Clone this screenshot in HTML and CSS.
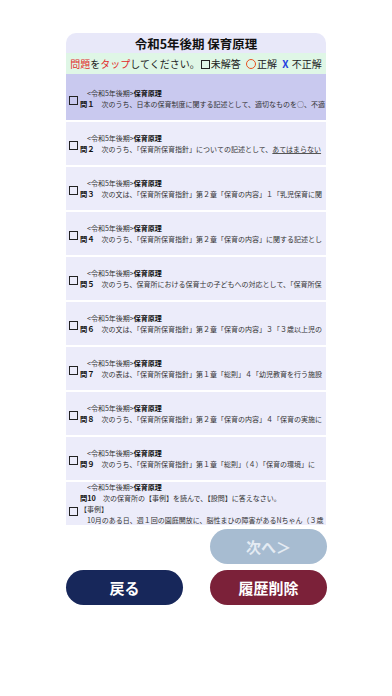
FILE: index.html
```html
<!DOCTYPE html>
<html lang="ja">
<head>
<meta charset="utf-8">
<title>令和5年後期 保育原理</title>
<link rel="stylesheet" href="styles.css">
</head>
<body>
<div class="page">
  <div class="panel">
    <div class="title">令和5年後期 保育原理</div>
    <div class="legend"><span class="red">問題</span>を<span class="red">タップ</span>してください。<span class="box"></span>未解答 <span class="circle"></span>正解 <span class="x">X</span> 不正解</div>
    <div class="list">
      <div class="row active">
        <span class="check"></span>
        <div class="body">
          <div class="meta">&lt;令和5年後期&gt;<b>保育原理</b></div>
          <div class="q"><b>問１</b>　次のうち、日本の保育制度に関する記述として、適切なものを○、不適</div>
        </div>
      </div>
      <div class="row">
        <span class="check"></span>
        <div class="body">
          <div class="meta">&lt;令和5年後期&gt;<b>保育原理</b></div>
          <div class="q"><b>問２</b>　次のうち、「保育所保育指針」についての記述として、<u>あてはまらない</u></div>
        </div>
      </div>
      <div class="row">
        <span class="check"></span>
        <div class="body">
          <div class="meta">&lt;令和5年後期&gt;<b>保育原理</b></div>
          <div class="q"><b>問３</b>　次の文は、「保育所保育指針」第２章「保育の内容」１「乳児保育に関</div>
        </div>
      </div>
      <div class="row">
        <span class="check"></span>
        <div class="body">
          <div class="meta">&lt;令和5年後期&gt;<b>保育原理</b></div>
          <div class="q"><b>問４</b>　次のうち、「保育所保育指針」第２章「保育の内容」に関する記述とし</div>
        </div>
      </div>
      <div class="row">
        <span class="check"></span>
        <div class="body">
          <div class="meta">&lt;令和5年後期&gt;<b>保育原理</b></div>
          <div class="q"><b>問５</b>　次のうち、保育所における保育士の子どもへの対応として、「保育所保</div>
        </div>
      </div>
      <div class="row">
        <span class="check"></span>
        <div class="body">
          <div class="meta">&lt;令和5年後期&gt;<b>保育原理</b></div>
          <div class="q"><b>問６</b>　次の文は、「保育所保育指針」第２章「保育の内容」３「３歳以上児の</div>
        </div>
      </div>
      <div class="row">
        <span class="check"></span>
        <div class="body">
          <div class="meta">&lt;令和5年後期&gt;<b>保育原理</b></div>
          <div class="q"><b>問７</b>　次の表は、「保育所保育指針」第１章「総則」４「幼児教育を行う施設</div>
        </div>
      </div>
      <div class="row">
        <span class="check"></span>
        <div class="body">
          <div class="meta">&lt;令和5年後期&gt;<b>保育原理</b></div>
          <div class="q"><b>問８</b>　次のうち、「保育所保育指針」第２章「保育の内容」４「保育の実施に</div>
        </div>
      </div>
      <div class="row">
        <span class="check"></span>
        <div class="body">
          <div class="meta">&lt;令和5年後期&gt;<b>保育原理</b></div>
          <div class="q"><b>問９</b>　次のうち、「保育所保育指針」第１章「総則」（４）「保育の環境」に</div>
        </div>
      </div>
      <div class="row long">
        <span class="check"></span>
        <div class="body">
          <div class="meta">&lt;令和5年後期&gt;<b>保育原理</b></div>
          <div class="q"><b>問10</b>　次の保育所の【事例】を読んで、【設問】に答えなさい。</div>
          <div class="q case">【事例】</div>
          <div class="q para">　10月のある日、週１回の園庭開放に、脳性まひの障害があるNちゃん（３歳</div>
        </div>
      </div>
    </div>
  </div>
  <div class="actions">
    <div class="btn-row end">
      <button class="btn next">次へ＞</button>
    </div>
    <div class="btn-row">
      <button class="btn back">戻る</button>
      <button class="btn clear">履歴削除</button>
    </div>
  </div>
</div>
</body>
</html>
```

FILE: styles.css
```css
* { box-sizing: border-box; }
html, body { margin: 0; padding: 0; background: #ffffff; }
body {
  font-family: "Noto Sans CJK JP", "Noto Sans", sans-serif;
  color: #222;
}
.page {
  width: 260px;
  margin: 0 auto;
  padding-top: 33px;
}
.panel {
  border-radius: 10px 10px 0 0;
  overflow: hidden;
  background: #e8e8f9;
}
.title {
  text-align: center;
  font-weight: 700;
  font-size: 12.5px;
  line-height: 18px;
  padding-top: 2px;
  color: #111;
}
.legend {
  background: #dff6e6;
  font-size: 10px;
  line-height: 21px;
  height: 21px;
  text-align: center;
  white-space: nowrap;
  color: #222;
  word-spacing: 1px;
}
.red { color: #e22a2a; }
.box {
  display: inline-block;
  vertical-align: -1px;
  width: 9px;
  height: 9px;
  border: 1px solid #222;
  margin: 0 1px 0 1px;
}
.circle {
  display: inline-block;
  vertical-align: -1px;
  width: 10px;
  height: 10px;
  border: 1.3px solid #e8501f;
  border-radius: 50%;
  margin: 0 1px 0 2px;
}
.x {
  color: #1f3fe0;
  font-weight: 700;
  margin-left: 2px;
}
.list {
  height: 451px;
  overflow: hidden;
  background: #ffffff;
  display: flex;
  flex-direction: column;
  gap: 2px;
}
.row {
  flex: none;
  height: 43px;
  background: #ececfa;
  display: flex;
  align-items: center;
  padding-left: 3px;
  overflow: hidden;
}
.row.active {
  background: #c9c9ef;
  height: 46px;
  padding-top: 3px;
}
.row.long {
  flex: 1;
  height: auto;
  align-items: flex-start;
  padding-top: 0;
}
.check {
  flex: none;
  width: 9px;
  height: 9px;
  border: 1.2px solid #222;
  margin-top: 3px;
  margin-right: 2px;
}
.row.long .check { margin-top: 25px; }
.body {
  flex: 1;
  min-width: 0;
  overflow: hidden;
}
.meta {
  font-size: 7px;
  line-height: 11px;
  padding-left: 7px;
  color: #333;
  white-space: nowrap;
  overflow: hidden;
}
.meta b { color: #111; }
.q {
  font-size: 7px;
  line-height: 11px;
  white-space: nowrap;
  overflow: hidden;
  color: #333;
}
.q b {
  font-size: 7.3px;
  color: #111;
}
.q u { text-decoration-color: #555; }
.q.case { line-height: 10px; }
.q.para { line-height: 11px; padding-top: 1px; }
.actions {
  width: 261px;
  margin-top: 4px;
  display: flex;
  flex-direction: column;
  gap: 6px;
}
.btn-row {
  display: flex;
  justify-content: space-between;
}
.btn-row.end { justify-content: flex-end; }
.btn {
  width: 117px;
  height: 35px;
  border: none;
  border-radius: 18px;
  font-family: "Noto Sans CJK JP", sans-serif;
  font-weight: 700;
  font-size: 15px;
  color: #ffffff;
  padding: 0;
}
.btn.next { background: #a7bcd1; color: #e4ebf3; }
.btn.back { background: #17275a; }
.btn.clear { background: #7b2139; }
```
